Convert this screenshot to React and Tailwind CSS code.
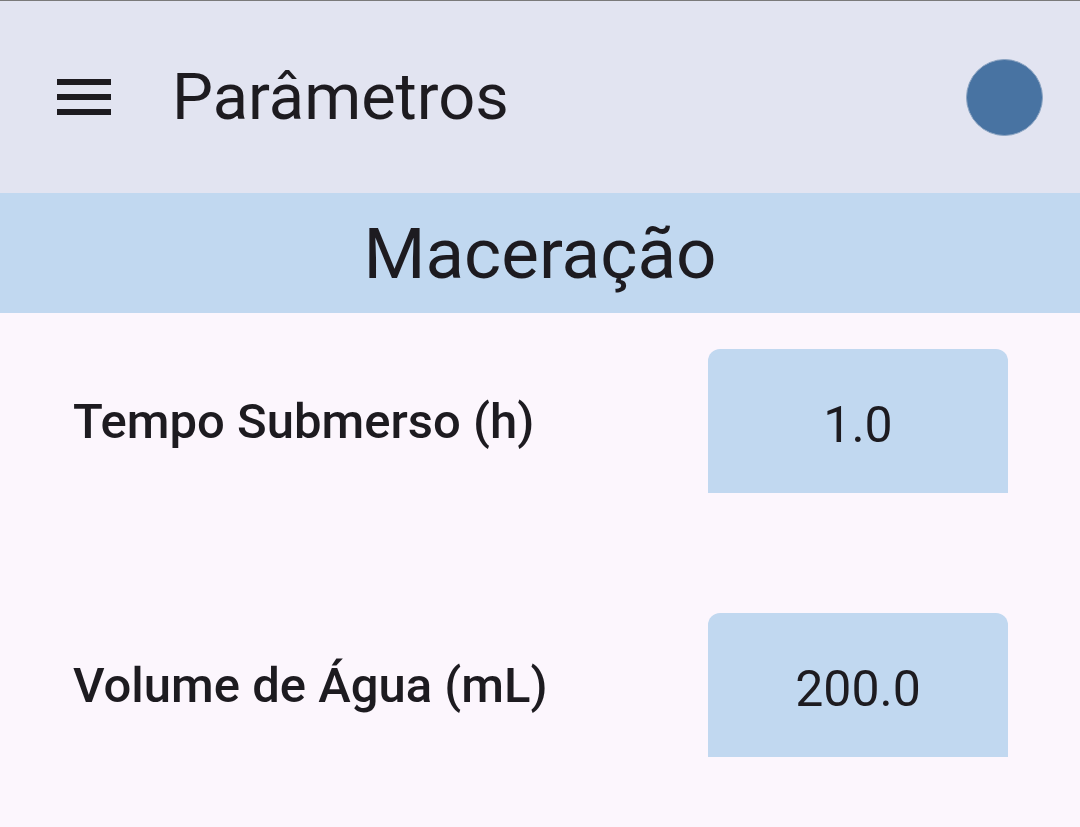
import React, { useState } from 'react';

const fields = [
  { label: 'Tempo Submerso (h)', value: '1.0' },
  { label: 'Volume de Água (mL)', value: '200.0' },
];

function MenuIcon() {
  return (
    <div className="flex w-[54px] flex-col gap-[9px]">
      <span className="block h-[6px] w-full bg-[#1d1b20]" />
      <span className="block h-[6px] w-full bg-[#1d1b20]" />
      <span className="block h-[6px] w-full bg-[#1d1b20]" />
    </div>
  );
}

export default function App() {
  const [values, setValues] = useState(fields.map((f) => f.value));

  return (
    <div
      className="flex h-[827px] w-[1080px] flex-col overflow-hidden bg-[#fcf6fd] text-[#1d1b20]"
      style={{ fontFamily: 'Roboto, "Noto Sans", sans-serif' }}
    >
      {/* top bar */}
      <header className="flex h-[193px] shrink-0 items-center border-t border-[#7a7a7a] bg-[#e2e4f1] pl-[57px] pr-[37px]">
        <MenuIcon />
        <h1 className="ml-[61px] text-[65px] leading-none font-normal">Parâmetros</h1>
        <div className="ml-auto h-[77px] w-[77px] rounded-full border border-[#8ba4c2] bg-[#4873a2]" />
      </header>

      {/* section title */}
      <div className="flex h-[120px] shrink-0 items-center justify-center bg-[#c1d8f0]">
        <h2 className="text-[71px] leading-none font-normal">Maceração</h2>
      </div>

      {/* fields */}
      <div className="flex flex-col gap-[120px] pt-[36px]">
        {fields.map((field, i) => (
          <div key={field.label} className="flex items-center pl-[73px] pr-[72px]">
            <label className="text-[49px] leading-none font-medium">{field.label}</label>
            <input
              className="ml-auto h-[144px] w-[300px] rounded-t-[12px] bg-[#c1d8f0] pt-[8px] text-center text-[50px] text-[#1d1b20] outline-none"
              value={values[i]}
              onChange={(e) => {
                const next = [...values];
                next[i] = e.target.value;
                setValues(next);
              }}
            />
          </div>
        ))}
      </div>
    </div>
  );
}
